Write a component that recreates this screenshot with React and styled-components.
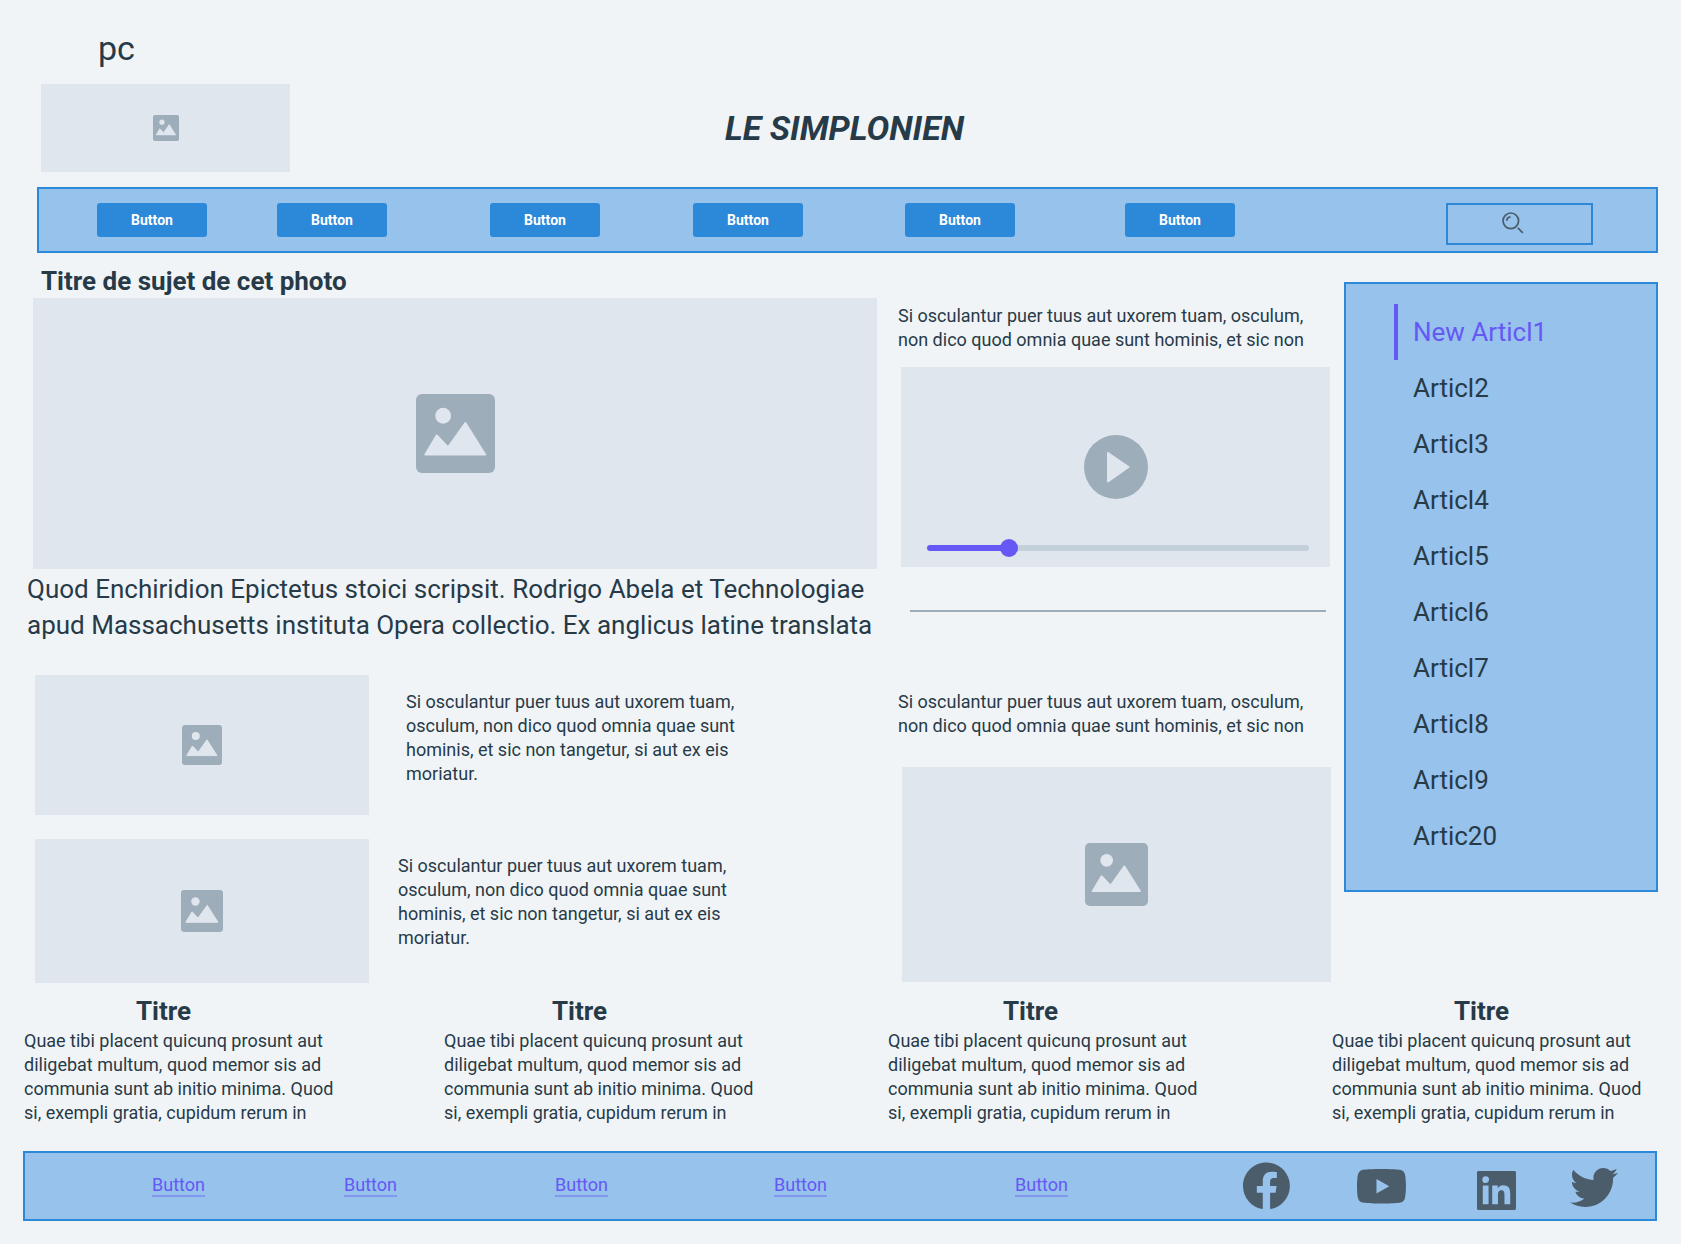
import React, { useState } from 'react';
import styled, { createGlobalStyle } from 'styled-components';

const color = {
  page: '#f0f4f7',
  panel: '#96c2eb',
  accent: '#2c88d9',
  media: '#dfe6ee',
  mediaIcon: '#9eadba',
  text: '#273a48',
  purple: '#6558f5',
  track: '#c3cfd9',
  social: '#4b5c6b',
};

const GlobalStyle = createGlobalStyle`
  *, *::before, *::after { box-sizing: border-box; }
  body {
    margin: 0;
    background: ${color.page};
    color: ${color.text};
    font-family: Roboto, "Liberation Sans", sans-serif;
  }
  h1, h2, p, ul { margin: 0; padding: 0; }
  ul { list-style: none; }
  svg { display: block; }
`;

const Page = styled.div`
  display: flex;
  flex-direction: column;
  padding: 28px 0 23px;
`;

const DeviceLabel = styled.p`
  padding-left: 98px;
  font-size: 34px;
  line-height: 40px;
`;

const Brand = styled.header`
  display: grid;
  grid-template-columns: 249px 1fr 249px;
  align-items: center;
  margin: 16px 33px 0 41px;
`;

const SiteTitle = styled.h1`
  font-size: 34px;
  line-height: 40px;
  font-weight: 700;
  font-style: italic;
  text-align: center;
`;

const Media = styled.div`
  position: relative;
  display: flex;
  align-items: center;
  justify-content: center;
  height: ${(p) => p.$height}px;
  margin-left: ${(p) => p.$inset || 0}px;
  background: ${color.media};
`;

const Bar = styled.div`
  display: grid;
  border: 2px solid ${color.accent};
  background: ${color.panel};
`;

const NavBar = styled(Bar).attrs({ as: 'nav' })`
  grid-template-columns: 180fr 213fr 203fr 212fr 220fr 321fr 147fr;
  align-items: start;
  justify-items: start;
  margin: 15px 23px 0 37px;
  padding: 14px 63px 6px 58px;
`;

const NavButton = styled.button`
  width: 110px;
  height: 34px;
  padding: 0;
  border: 0;
  border-radius: 3px;
  background: ${color.accent};
  color: #fff;
  font: 700 14px/20px Roboto, "Liberation Sans", sans-serif;
  cursor: pointer;
`;

const SearchBox = styled.label`
  position: relative;
  width: 100%;
  svg {
    position: absolute;
    top: 9px;
    left: 38%;
  }
`;

const SearchInput = styled.input`
  display: block;
  width: 100%;
  height: 42px;
  padding: 0 8px;
  border: 2px solid ${color.accent};
  border-radius: 0;
  background: transparent;
  color: ${color.text};
  font: 18px/24px Roboto, "Liberation Sans", sans-serif;
  appearance: none;
`;

const Main = styled.main`
  display: grid;
  grid-template-columns: minmax(0, 1304fr) minmax(0, 314fr);
  gap: 13px;
  align-items: start;
  margin: 0 23px 0 27px;
`;

const Content = styled.div`
  display: grid;
  grid-template-columns: minmax(0, 850fr) minmax(0, 433fr);
  gap: 21px;
  align-items: start;
`;

const LeadColumn = styled.section`
  padding-top: 11px;
`;

const LeadTitle = styled.h2`
  padding-left: 14px;
  font-size: 26px;
  line-height: 34px;
  font-weight: 700;
`;

const LeadText = styled.p`
  margin: 2px 0 32px;
  font-size: 26px;
  line-height: 36px;
`;

const Story = styled.article`
  display: grid;
  grid-template-columns: 334fr 508fr;
  align-items: start;
  margin-left: 8px;
  & + & { margin-top: 24px; }
  > p {
    max-width: ${(p) => 340 + p.$gap}px;
    padding: 15px 0 0 ${(p) => p.$gap}px;
  }
`;

const Text = styled.p`
  font-size: 18px;
  line-height: 24px;
`;

const SideColumn = styled.section`
  display: flex;
  flex-direction: column;
  padding-top: 51px;
`;

const Video = styled(Media)`
  margin: 15px 1px 0 3px;
`;

const PlayButton = styled.button`
  padding: 0;
  border: 0;
  border-radius: 50%;
  background: none;
  cursor: pointer;
`;

const Seek = styled.input`
  position: absolute;
  left: 26px;
  right: 21px;
  bottom: 10px;
  width: calc(100% - 47px);
  height: 18px;
  margin: 0;
  background: transparent;
  appearance: none;
  &::-webkit-slider-runnable-track {
    height: 6px;
    border-radius: 3px;
    background: linear-gradient(
      to right,
      ${color.purple} var(--played),
      ${color.track} var(--played)
    );
  }
  &::-webkit-slider-thumb {
    width: 18px;
    height: 18px;
    margin-top: -6px;
    border: 0;
    border-radius: 50%;
    background: ${color.purple};
    appearance: none;
  }
`;

const Divider = styled.hr`
  width: auto;
  height: 2px;
  margin: 43px 5px 78px 12px;
  border: 0;
  background: ${color.mediaIcon};
`;

const ColumnImage = styled(Media)`
  margin-top: 29px;
`;

const Sidebar = styled.aside`
  margin-top: 29px;
  padding: 20px 0 26px 48px;
  border: 2px solid ${color.accent};
  background: ${color.panel};
`;

const ArticleLink = styled.a`
  display: block;
  padding-left: 15px;
  border-left: 4px solid ${(p) => (p.$active ? color.purple : 'transparent')};
  color: ${(p) => (p.$active ? color.purple : color.text)};
  font-size: 26px;
  line-height: 56px;
  text-decoration: none;
`;

const Columns = styled.section`
  display: grid;
  grid-template-columns: 420fr 444fr 444fr 325fr;
  margin: 10px 24px 0;
  p { max-width: 320px; }
`;

const ColumnTitle = styled.h2`
  padding-left: ${(p) => p.$indent}px;
  font-size: 26px;
  line-height: 36px;
  font-weight: 700;
`;

const Footer = styled(Bar).attrs({ as: 'footer' })`
  grid-template-columns: 192fr 211fr 219fr 241fr 228fr 114fr 120fr 93fr 48fr;
  align-items: center;
  justify-items: start;
  min-height: 70px;
  margin: 26px 24px 0 23px;
  padding: 0 37px 0 127px;
`;

const FooterLink = styled.a`
  border-bottom: 2px solid rgba(101, 88, 245, 0.4);
  color: ${color.purple};
  font-size: 18px;
  line-height: 20px;
  text-decoration: none;
`;

const SocialLink = styled.a`
  color: ${color.social};
  svg { overflow: visible; }
`;

const ImageIcon = ({ size }) => (
  <svg width={size} height={size} viewBox="0 0 80 80" aria-hidden="true">
    <rect width="80" height="80" rx="6" fill={color.mediaIcon} />
    <circle cx="27.5" cy="22" r="8" fill={color.media} />
    <path
      d="M9.5 61.2 21 42 32.5 54 50 29.5 70 61.2Z"
      fill={color.media}
      stroke={color.media}
      strokeWidth="2"
      strokeLinejoin="round"
    />
  </svg>
);

const PlayIcon = () => (
  <svg width="64" height="64" viewBox="0 0 64 64" aria-hidden="true">
    <circle cx="32" cy="32" r="32" fill={color.mediaIcon} />
    <path
      d="M24 18 44.5 32 24 46.4Z"
      fill={color.media}
      stroke={color.media}
      strokeWidth="2"
      strokeLinejoin="round"
    />
  </svg>
);

const SearchIcon = () => (
  <svg
    width="22"
    height="22"
    viewBox="0 0 22 22"
    fill="none"
    stroke={color.social}
    strokeWidth="1.7"
    aria-hidden="true"
  >
    <circle cx="8.8" cy="8.8" r="7.8" />
    <path d="M4.7 8.8A4.2 4.2 0 0 1 8.5 4.8M15.8 15.8 20.8 20.8" />
  </svg>
);

const socials = [
  {
    name: 'Facebook',
    transform: 'translate(-0.75 -0.25) scale(0.0945)',
    d: 'M504 256C504 119 393 8 256 8S8 119 8 256c0 123.78 90.69 226.38 209.25 245V327.69h-63V256h63v-54.64c0-62.15 37-96.48 93.67-96.48 27.14 0 55.52 4.84 55.52 4.84v61h-31.28c-30.8 0-40.41 19.12-40.41 38.73V256h68.78l-11 71.69h-57.78V501C413.31 482.38 504 379.78 504 256z',
  },
  {
    name: 'YouTube',
    transform: 'translate(0 -0.2) scale(2.04)',
    d: 'M23.498 6.186a3.016 3.016 0 0 0-2.122-2.136C19.505 3.545 12 3.545 12 3.545s-7.505 0-9.377.505A3.017 3.017 0 0 0 .502 6.186C0 8.07 0 12 0 12s0 3.93.502 5.814a3.016 3.016 0 0 0 2.122 2.136c1.871.505 9.376.505 9.376.505s7.505 0 9.377-.505a3.015 3.015 0 0 0 2.122-2.136C24 15.93 24 12 24 12s0-3.93-.502-5.814zM9.545 15.568V8.432L15.818 12l-6.273 3.568z',
  },
  {
    name: 'LinkedIn',
    transform: 'translate(-5.46 3.54) scale(0.04875)',
    d: 'M880 112H144c-17.7 0-32 14.3-32 32v736c0 17.7 14.3 32 32 32h736c17.7 0 32-14.3 32-32V144c0-17.7-14.3-32-32-32zM349.3 793.7H230.6V411.9h118.7v381.8zm-59.3-434a68.8 68.8 0 1 1 68.8-68.8c-.1 38-30.9 68.8-68.8 68.8zm503.7 434H675.1V608c0-44.3-.8-101.2-61.7-101.2-61.7 0-71.2 48.2-71.2 98v188.9H423.7V411.9h113.8v52.2h1.6c15.8-30 54.5-61.7 112.3-61.7 120.2 0 142.3 79.1 142.3 181.9v209.4z',
  },
  {
    name: 'Twitter',
    transform: 'translate(0 1.5) scale(0.09375)',
    d: 'M459.37 151.716c.325 4.548.325 9.097.325 13.645 0 138.72-105.583 298.558-298.558 298.558-59.452 0-114.68-17.219-161.137-47.106 8.447.974 16.568 1.299 25.34 1.299 49.055 0 94.213-16.568 130.274-44.832-46.132-.975-84.792-31.188-98.112-72.772 6.498.974 12.995 1.624 19.818 1.624 9.421 0 18.843-1.3 27.614-3.573-48.081-9.747-84.143-51.98-84.143-102.985v-1.299c13.969 7.797 30.214 12.67 47.431 13.319-28.264-18.843-46.781-51.005-46.781-87.391 0-19.492 5.197-37.36 14.294-52.954 51.655 63.675 129.3 105.258 216.365 109.807-1.624-7.797-2.599-15.918-2.599-24.04 0-57.828 46.782-104.934 104.934-104.934 30.213 0 57.502 12.67 76.67 33.137 23.715-4.548 46.456-13.32 66.599-25.34-7.798 24.366-24.366 44.833-46.132 57.827 21.117-2.273 41.584-8.122 60.426-16.243-14.292 20.791-32.161 39.308-52.628 54.253z',
  },
];

const SocialIcon = ({ transform, d }) => (
  <svg width="48" height="48" viewBox="0 0 48 48" fill="currentColor" aria-hidden="true">
    <path transform={transform} d={d} />
  </svg>
);

const articles = [
  'New Articl1', 'Articl2', 'Articl3', 'Articl4', 'Articl5',
  'Articl6', 'Articl7', 'Articl8', 'Articl9', 'Artic20',
];

const shortText =
  'Si osculantur puer tuus aut uxorem tuam, osculum, non dico quod omnia quae sunt hominis, et sic non';
const storyText = `${shortText} tangetur, si aut ex eis moriatur.`;
const columnText =
  'Quae tibi placent quicunq prosunt aut diligebat multum, quod memor sis ad communia sunt ab initio minima. Quod si, exempli gratia, cupidum rerum in';

const navButtons = [1, 2, 3, 4, 5, 6];
const footerLinks = [1, 2, 3, 4, 5];
const columnIndents = [112, 108, 115, 122];

function VideoPlayer() {
  const [played, setPlayed] = useState(20);
  return (
    <Video $height={200}>
      <PlayButton type="button" aria-label="Play">
        <PlayIcon />
      </PlayButton>
      <Seek
        type="range"
        aria-label="Seek"
        min="0"
        max="100"
        value={played}
        onChange={(e) => setPlayed(Number(e.target.value))}
        style={{ '--played': `${played}%` }}
      />
    </Video>
  );
}

export default function App() {
  return (
    <>
      <GlobalStyle />
      <Page>
        <DeviceLabel>pc</DeviceLabel>
        <Brand>
          <Media $height={88}>
            <ImageIcon size={26} />
          </Media>
          <SiteTitle>LE SIMPLONIEN</SiteTitle>
        </Brand>

        <NavBar>
          {navButtons.map((n) => (
            <NavButton key={n} type="button">Button</NavButton>
          ))}
          <SearchBox>
            <SearchInput type="search" aria-label="Search" />
            <SearchIcon />
          </SearchBox>
        </NavBar>

        <Main>
          <Content>
            <LeadColumn>
              <LeadTitle>Titre de sujet de cet photo</LeadTitle>
              <Media $height={271} $inset={6}>
                <ImageIcon size={79} />
              </Media>
              <LeadText>
                Quod Enchiridion Epictetus stoici scripsit. Rodrigo Abela et Technologiae apud
                Massachusetts instituta Opera collectio. Ex anglicus latine translata
              </LeadText>
              <Story $gap={37}>
                <Media $height={140}>
                  <ImageIcon size={40} />
                </Media>
                <Text>{storyText}</Text>
              </Story>
              <Story $gap={29}>
                <Media $height={144}>
                  <ImageIcon size={42} />
                </Media>
                <Text>{storyText}</Text>
              </Story>
            </LeadColumn>

            <SideColumn>
              <Text>{shortText}</Text>
              <VideoPlayer />
              <Divider />
              <Text>{shortText}</Text>
              <ColumnImage $height={215} $inset={4}>
                <ImageIcon size={63} />
              </ColumnImage>
            </SideColumn>
          </Content>

          <Sidebar>
            <ul>
              {articles.map((title, i) => (
                <li key={title}>
                  <ArticleLink href="#" $active={i === 0}>{title}</ArticleLink>
                </li>
              ))}
            </ul>
          </Sidebar>
        </Main>

        <Columns>
          {columnIndents.map((indent) => (
            <article key={indent}>
              <ColumnTitle $indent={indent}>Titre</ColumnTitle>
              <Text>{columnText}</Text>
            </article>
          ))}
        </Columns>

        <Footer>
          {footerLinks.map((n) => (
            <FooterLink key={n} href="#">Button</FooterLink>
          ))}
          {socials.map((s) => (
            <SocialLink key={s.name} href="#" aria-label={s.name}>
              <SocialIcon transform={s.transform} d={s.d} />
            </SocialLink>
          ))}
        </Footer>
      </Page>
    </>
  );
}
